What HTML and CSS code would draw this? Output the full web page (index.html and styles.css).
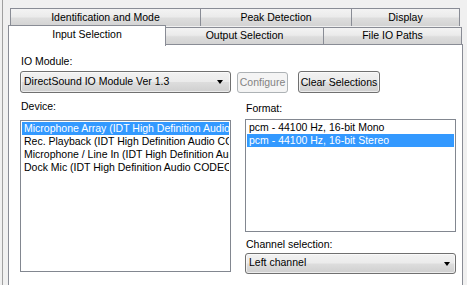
FILE: index.html
```html
<!DOCTYPE html>
<html>
<head>
<meta charset="utf-8">
<link rel="stylesheet" href="styles.css">
</head>
<body>
<div class="frame">
  <div class="tabrow row1">
    <div class="tab t-ident">Identification and Mode</div>
    <div class="tab t-peak">Peak Detection</div>
    <div class="tab t-disp">Display</div>
  </div>
  <div class="tabrow row2">
    <div class="tab tab-sel t-input">Input Selection</div>
    <div class="tab t-output">Output Selection</div>
    <div class="tab t-file">File IO Paths</div>
  </div>
  <div class="panel">
    <div class="label lbl-io">IO Module:</div>
    <div class="toprow">
      <div class="combo combo-io"><span>DirectSound IO Module Ver 1.3</span><i class="arrow"></i></div>
      <div class="btn btn-disabled btn-config">Configure</div>
      <div class="btn btn-clear">Clear Selections</div>
    </div>
    <div class="cols">
      <div class="col col-left">
        <div class="label lbl-dev">Device:</div>
        <div class="list list-dev">
          <div class="item sel">Microphone Array (IDT High Definition Audio CODEC)</div>
          <div class="item">Rec. Playback (IDT High Definition Audio CODEC)</div>
          <div class="item">Microphone / Line In (IDT High Definition Audio CODEC)</div>
          <div class="item">Dock Mic (IDT High Definition Audio CODEC)</div>
        </div>
      </div>
      <div class="col col-right">
        <div class="label lbl-fmt">Format:</div>
        <div class="list list-fmt">
          <div class="item">pcm - 44100 Hz, 16-bit Mono</div>
          <div class="item sel">pcm - 44100 Hz, 16-bit Stereo</div>
        </div>
        <div class="label lbl-ch">Channel selection:</div>
        <div class="combo combo-ch"><span>Left channel</span><i class="arrow"></i></div>
      </div>
    </div>
  </div>
</div>
</body>
</html>
```

FILE: styles.css
```css
* { box-sizing: border-box; }
html, body {
  margin: 0;
  padding: 0;
  background: #f0f0f0;
  overflow: hidden;
}
body {
  width: 467px;
  height: 285px;
  font-family: "Liberation Sans", Arial, sans-serif;
  font-size: 10.5px;
  color: #000;
}
.frame {
  margin-left: 2px;
  border-left: 1px solid #a0a0a0;
  padding: 8px 0 0 5px;
  height: 285px;
  overflow: hidden;
}
.tabrow {
  display: flex;
}
.row1 {
  margin-left: 2px;
  height: 18px;
}
.row2 {
  height: 18px;
  align-items: flex-end;
}
.tab {
  border: 1px solid #898c95;
  border-bottom: none;
  background: linear-gradient(to bottom, #f3f3f3 0%, #ebebeb 45%, #dddddd 55%, #d3d3d3 100%);
  display: flex;
  align-items: center;
  justify-content: center;
  line-height: 13px;
  padding-bottom: 1px;
}
.row1 .tab { height: 18px; }
.row2 .tab { height: 17px; }
.t-ident { width: 191px; }
.t-peak { width: 152px; margin-left: -1px; }
.t-disp { width: 109px; margin-left: -1px; }
.t-input { width: 158px; }
.t-output { width: 159px; margin-left: -1px; }
.t-file { width: 139px; margin-left: -1px; }
.row2 .tab-sel {
  height: 21px;
  margin-bottom: -2px;
  background: #fff;
  position: relative;
  z-index: 1;
  padding-bottom: 4px;
}
.panel {
  width: 455px;
  height: 250px;
  border: 1px solid #898c95;
  border-bottom: none;
  background: #fff;
  padding: 10px 0 0 11px;
}
.label {
  line-height: 13px;
  height: 13px;
  padding-left: 1px;
}
.toprow {
  display: flex;
  align-items: center;
  margin-top: 2px;
  height: 24px;
}
.combo {
  position: relative;
  height: 22px;
  border: 1px solid #707070;
  border-radius: 3px;
  background: linear-gradient(to bottom, #f2f2f2 0%, #ebebeb 48%, #dddddd 52%, #cfcfcf 100%);
  box-shadow: inset 0 0 0 1px rgba(255,255,255,0.6);
  line-height: 18px;
  padding-left: 3px;
  white-space: nowrap;
}
.combo-io { width: 211px; }
.arrow {
  position: absolute;
  right: 7px;
  top: 8px;
  width: 0;
  height: 0;
  border-left: 3.5px solid transparent;
  border-right: 3.5px solid transparent;
  border-top: 4px solid #000;
}
.btn {
  height: 21px;
  border: 1px solid #707070;
  border-radius: 3px;
  background: linear-gradient(to bottom, #f2f2f2 0%, #ebebeb 48%, #dddddd 52%, #cfcfcf 100%);
  box-shadow: inset 0 0 0 1px rgba(255,255,255,0.6);
  display: flex;
  align-items: center;
  justify-content: center;
  line-height: 13px;
  white-space: nowrap;
}
.btn-config {
  width: 51px;
  margin-left: 6px;
}
.btn-disabled {
  border-color: #adb2b5;
  background: #f4f4f4;
  color: #838383;
  box-shadow: none;
}
.btn-clear {
  width: 82px;
  margin-left: 10px;
  height: 22px;
}
.cols {
  display: flex;
}
.col-left {
  width: 211px;
  padding-top: 6px;
}
.col-right {
  width: 211px;
  margin-left: 14px;
  padding-top: 8px;
}
.lbl-dev { margin-bottom: 7px; }
.lbl-fmt { margin-bottom: 4px; }
.list {
  border: 1px solid #828790;
  background: #fff;
  padding: 1px;
  overflow: hidden;
}
.list-dev { height: 152px; }
.list-fmt { height: 113px; }
.item {
  height: 13px;
  line-height: 13px;
  padding-left: 2px;
  white-space: nowrap;
  overflow: hidden;
}
.item.sel {
  background: #3399ff;
  color: #fff;
}
.lbl-ch { margin-top: 6px; margin-bottom: 2px; }
.combo-ch {
  width: 211px;
  height: 21px;
  line-height: 17px;
}
.combo-ch .arrow { right: 5px; top: 8px; }
```
